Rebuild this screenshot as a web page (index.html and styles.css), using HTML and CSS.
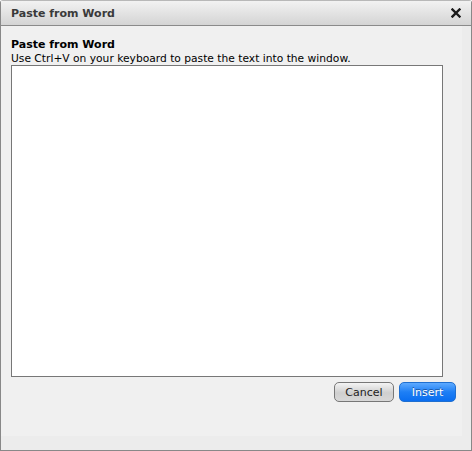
FILE: index.html
```html
<!DOCTYPE html>
<html>
<head>
<meta charset="utf-8">
<link rel="stylesheet" href="styles.css">
</head>
<body>
<div class="window">
  <div class="titlebar">
    <span class="title">Paste from Word</span>
    <svg class="close" width="10" height="10" viewBox="0 0 10 10"><path d="M1.5 1.5L8.5 8.5M8.5 1.5L1.5 8.5" stroke="#1a1a1a" stroke-width="2.4" stroke-linecap="square"/></svg>
  </div>
  <div class="body">
    <div class="inner">
      <div class="heading">Paste from Word</div>
      <div class="hint">Use Ctrl+V on your keyboard to paste the text into the window.</div>
      <div class="paste"></div>
      <div class="actions">
        <button class="btn cancel">Cancel</button>
        <button class="btn insert">Insert</button>
      </div>
    </div>
  </div>
</div>
</body>
</html>
```
FILE: styles.css
```css
html, body { margin: 0; padding: 0; }
body { font-family: "DejaVu Sans", "Liberation Sans", sans-serif; background: #fff; }
.window {
  width: 472px; height: 451px; box-sizing: border-box;
  border: 1px solid #888; border-top: 1px solid #b8b8b8; border-radius: 3px 3px 0 0;
  display: flex; flex-direction: column; background: #ececec;
}
.titlebar {
  height: 24px; flex: none;
  background: linear-gradient(#f2f2f2, #d4d4d4);
  border-bottom: 1px solid #8a8a8a;
  display: flex; align-items: center; justify-content: space-between;
  padding: 0 10px 0 10px;
}
.title { font-size: 11px; font-weight: bold; color: #3a3a3a; }
.close { display: block; }
.body { flex: 1; display: flex; }
.inner { flex: 1; margin: 0 9px 14px 0; background: #f0f0f0; padding: 0 0 0 10px; display: flex; flex-direction: column; }
.heading { margin-top: 12px; font-size: 11px; font-weight: bold; color: #000; line-height: 14px; }
.hint { font-size: 10.7px; color: #000; line-height: 13px; }
.paste { margin-top: 0; width: 432px; height: 312px; box-sizing: border-box; background: #fff; border: 1px solid #777; }
.actions { display: flex; justify-content: flex-end; gap: 5px; margin-top: 5px; margin-right: 6px; }
.btn {
  height: 20px; border-radius: 5px; font-family: inherit; font-size: 11px; padding: 0;
  box-sizing: border-box;
}
.cancel { width: 60px; border: 1px solid #777; color: #222; background: linear-gradient(#f4f4f4, #cfcfcf 55%, #d8d8d8); }
.insert { width: 57px; border: 1px solid #1f6fd0; color: #fff; background: linear-gradient(#5eaaff, #1e7ff5 50%, #0a6ef0); text-shadow: 0 -1px 0 #1c55a0; }
```
